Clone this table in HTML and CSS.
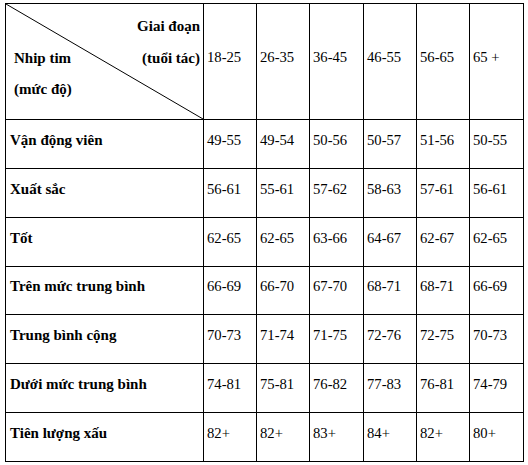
FILE: index.html
```html
<!DOCTYPE html>
<html lang="vi">
<head>
<meta charset="utf-8">
<title>Nhịp tim theo độ tuổi</title>
<link rel="stylesheet" href="styles.css">
</head>
<body>
<table class="hr-table">
  <colgroup>
    <col class="c-label">
    <col class="c-num"><col class="c-num"><col class="c-num2">
    <col class="c-num"><col class="c-num"><col class="c-num2">
  </colgroup>
  <tr class="row-head">
    <td class="corner">
      <svg class="diag" viewBox="0 0 100 100" preserveAspectRatio="none" aria-hidden="true">
        <line x1="0" y1="0" x2="100" y2="100" vector-effect="non-scaling-stroke"/>
      </svg>
      <div class="corner-inner">
        <div class="cl cl-right">Giai đoạn</div>
        <div class="cl cl-split"><span>Nhip tim</span><span>(tuổi tác)</span></div>
        <div class="cl">(mức độ)</div>
      </div>
    </td>
    <td>18-25</td><td>26-35</td><td>36-45</td><td>46-55</td><td>56-65</td><td>65 +</td>
  </tr>
  <tr><th>Vận động viên</th><td>49-55</td><td>49-54</td><td>50-56</td><td>50-57</td><td>51-56</td><td>50-55</td></tr>
  <tr><th>Xuất sắc</th><td>56-61</td><td>55-61</td><td>57-62</td><td>58-63</td><td>57-61</td><td>56-61</td></tr>
  <tr><th>Tốt</th><td>62-65</td><td>62-65</td><td>63-66</td><td>64-67</td><td>62-67</td><td>62-65</td></tr>
  <tr class="row-short"><th>Trên mức trung bình</th><td>66-69</td><td>66-70</td><td>67-70</td><td>68-71</td><td>68-71</td><td>66-69</td></tr>
  <tr><th>Trung bình cộng</th><td>70-73</td><td>71-74</td><td>71-75</td><td>72-76</td><td>72-75</td><td>70-73</td></tr>
  <tr><th>Dưới mức trung bình</th><td>74-81</td><td>75-81</td><td>76-82</td><td>77-83</td><td>76-81</td><td>74-79</td></tr>
  <tr><th>Tiên lượng xấu</th><td>82+</td><td>82+</td><td>83+</td><td>84+</td><td>82+</td><td>80+</td></tr>
</table>
</body>
</html>
```

FILE: styles.css
```css
html, body {
  margin: 0;
  padding: 0;
  background: #ffffff;
}

body {
  font-family: "Liberation Serif", "Times New Roman", serif;
  font-size: 14.67px;
  color: #000000;
}

.hr-table {
  border-collapse: collapse;
  table-layout: fixed;
  width: 519px;
  margin: 3px 0 0 5px;
}

.c-label { width: 198px; }
.c-num { width: 53px; }
.c-num2 { width: 54px; }

.hr-table td,
.hr-table th {
  border: 1px solid #000000;
  padding: 0 3px 8px 3px;
  vertical-align: middle;
  text-align: left;
  line-height: 17px;
  white-space: nowrap;
}

.hr-table tr { height: 49px; }
.hr-table .row-short { height: 48px; }
.hr-table .row-head { height: 116px; }

.hr-table th {
  font-weight: bold;
  font-size: 15px;
  padding-left: 4px;
}

.hr-table td.corner {
  position: relative;
  vertical-align: top;
  padding: 7px 3px 0 8px;
  font-weight: bold;
  font-size: 15px;
}

.diag {
  position: absolute;
  left: 0;
  top: 0;
  width: 100%;
  height: 100%;
  overflow: visible;
}

.diag line {
  stroke: #000000;
  stroke-width: 1;
}

.corner-inner {
  position: relative;
  display: flex;
  flex-direction: column;
}

.cl {
  line-height: 31.7px;
}

.cl-right { text-align: right; }

.cl-split {
  display: flex;
  justify-content: space-between;
}
```
